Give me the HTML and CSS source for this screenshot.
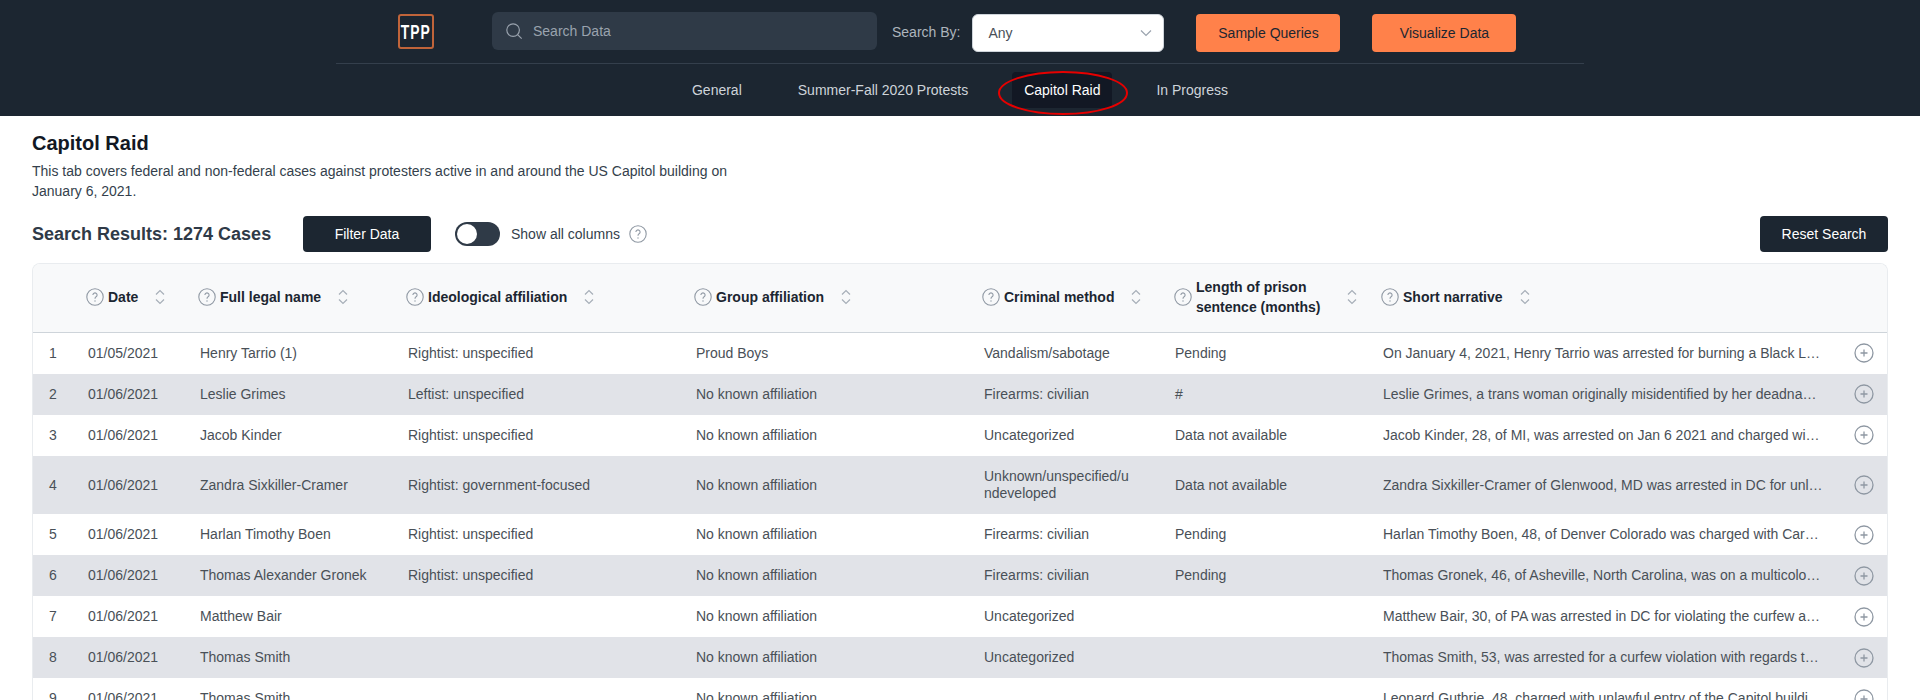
FILE: index.html
```html
<!DOCTYPE html>
<html lang="en">
<head>
    <meta charset="UTF-8">
    <title>Capitol Raid</title>
    <link rel="stylesheet" href="styles.css">
</head>
<body>
    <svg class="defs" width="0" height="0">
        <symbol id="help" viewBox="0 0 18 18">
            <circle cx="9" cy="9" r="8.200" fill="none" stroke="currentColor" stroke-width="1.100"/>
            <path d="M6.900 7a2.100 2.100 0 1 1 3.200 1.800C9.300 9.300 9 9.800 9 10.700" fill="none" stroke="currentColor" stroke-width="1.100"/>
            <circle cx="9" cy="13" r=".7" fill="currentColor"/>
        </symbol>
        <symbol id="sort" viewBox="0 0 12 18">
            <path d="M2 6.500 6 2.500l4 4M2 11.500l4 4 4-4" fill="none" stroke="currentColor" stroke-width="1.200"/>
        </symbol>
        <symbol id="plus" viewBox="0 0 20 20">
            <circle cx="10" cy="10" r="9" fill="none" stroke="currentColor" stroke-width="1.300"/>
            <path d="M10 6.500v7M6.500 10h7" fill="none" stroke="currentColor" stroke-width="1.300"/>
        </symbol>
    </svg>

    <header class="topbar">
        <div class="topbar-main">
            <div class="logo"><span>TPP</span></div>
            <div class="search">
                <svg class="search-icon" viewBox="0 0 20 20"><circle cx="9" cy="9" r="7" fill="none" stroke="currentColor" stroke-width="1.300"/><path d="m14 14 4.500 4.500" stroke="currentColor" stroke-width="1.300"/></svg>
                <span>Search Data</span>
            </div>
            <span class="search-by">Search By:</span>
            <div class="select">
                <span>Any</span>
                <svg class="select-arrow" viewBox="0 0 12 8"><path d="m1 1.500 5 5 5-5" fill="none" stroke="currentColor" stroke-width="1.200"/></svg>
            </div>
            <button class="btn btn-orange">Sample Queries</button>
            <button class="btn btn-orange">Visualize Data</button>
        </div>
        <nav class="tabs">
            <a class="tab">General</a>
            <a class="tab">Summer-Fall 2020 Protests</a>
            <a class="tab active">Capitol Raid<svg class="ring" viewBox="0 0 130 44"><ellipse cx="65" cy="22" rx="64" ry="21" fill="none" stroke="#e60000" stroke-width="2"/></svg></a>
            <a class="tab">In Progress</a>
        </nav>
    </header>

    <main class="content">
        <h1>Capitol Raid</h1>
        <p class="intro">This tab covers federal and non-federal cases against protesters active in and around the US Capitol building on January 6, 2021.</p>

        <div class="toolbar">
            <h2>Search Results: 1274 Cases</h2>
            <button class="btn btn-dark">Filter Data</button>
            <span class="switch"><span class="knob"></span></span>
            <span class="switch-label">Show all columns</span>
            <svg class="help"><use href="#help"/></svg>
            <button class="btn btn-dark reset">Reset Search</button>
        </div>

        <div class="table-wrap">
            <table>
                <colgroup>
                    <col class="c-num"><col class="c-date"><col class="c-name"><col class="c-ideo"><col class="c-group"><col class="c-method"><col class="c-length"><col class="c-story"><col class="c-more">
                </colgroup>
                <thead>
                    <tr>
                        <th></th>
                        <th><div class="th"><svg class="help"><use href="#help"/></svg><span>Date</span><svg class="sort"><use href="#sort"/></svg></div></th>
                        <th><div class="th"><svg class="help"><use href="#help"/></svg><span>Full legal name</span><svg class="sort"><use href="#sort"/></svg></div></th>
                        <th><div class="th"><svg class="help"><use href="#help"/></svg><span>Ideological affiliation</span><svg class="sort"><use href="#sort"/></svg></div></th>
                        <th><div class="th"><svg class="help"><use href="#help"/></svg><span>Group affiliation</span><svg class="sort"><use href="#sort"/></svg></div></th>
                        <th><div class="th"><svg class="help"><use href="#help"/></svg><span>Criminal method</span><svg class="sort"><use href="#sort"/></svg></div></th>
                        <th><div class="th th-length"><svg class="help"><use href="#help"/></svg><span>Length of prison sentence (months)</span><svg class="sort"><use href="#sort"/></svg></div></th>
                        <th><div class="th"><svg class="help"><use href="#help"/></svg><span>Short narrative</span><svg class="sort"><use href="#sort"/></svg></div></th>
                        <th></th>
                    </tr>
                </thead>
                <tbody>
                    <tr><td>1</td><td>01/05/2021</td><td>Henry Tarrio (1)</td><td>Rightist: unspecified</td><td>Proud Boys</td><td>Vandalism/sabotage</td><td>Pending</td><td class="story">On January 4, 2021, Henry Tarrio was arrested for burning a Black Lives Matter banner stolen from a church</td><td class="more"><svg class="plus"><use href="#plus"/></svg></td></tr>
                    <tr><td>2</td><td>01/06/2021</td><td>Leslie Grimes</td><td>Leftist: unspecified</td><td>No known affiliation</td><td>Firearms: civilian</td><td>#</td><td class="story">Leslie Grimes, a trans woman originally misidentified by her deadname in court records and reports</td><td class="more"><svg class="plus"><use href="#plus"/></svg></td></tr>
                    <tr><td>3</td><td>01/06/2021</td><td>Jacob Kinder</td><td>Rightist: unspecified</td><td>No known affiliation</td><td>Uncategorized</td><td>Data not available</td><td class="story">Jacob Kinder, 28, of MI, was arrested on Jan 6 2021 and charged with violating the curfew order</td><td class="more"><svg class="plus"><use href="#plus"/></svg></td></tr>
                    <tr><td>4</td><td>01/06/2021</td><td>Zandra Sixkiller-Cramer</td><td>Rightist: government-focused</td><td>No known affiliation</td><td class="method-long">Unknown/unspecified/undeveloped</td><td>Data not available</td><td class="story">Zandra Sixkiller-Cramer of Glenwood, MD was arrested in DC for unlawful entry of the Capitol</td><td class="more"><svg class="plus"><use href="#plus"/></svg></td></tr>
                    <tr><td>5</td><td>01/06/2021</td><td>Harlan Timothy Boen</td><td>Rightist: unspecified</td><td>No known affiliation</td><td>Firearms: civilian</td><td>Pending</td><td class="story">Harlan Timothy Boen, 48, of Denver Colorado was charged with Carrying a Pistol Without a License</td><td class="more"><svg class="plus"><use href="#plus"/></svg></td></tr>
                    <tr><td>6</td><td>01/06/2021</td><td>Thomas Alexander Gronek</td><td>Rightist: unspecified</td><td>No known affiliation</td><td>Firearms: civilian</td><td>Pending</td><td class="story">Thomas Gronek, 46, of Asheville, North Carolina, was on a multicolored bus when it was stopped by police</td><td class="more"><svg class="plus"><use href="#plus"/></svg></td></tr>
                    <tr><td>7</td><td>01/06/2021</td><td>Matthew Bair</td><td></td><td>No known affiliation</td><td>Uncategorized</td><td></td><td class="story">Matthew Bair, 30, of PA was arrested in DC for violating the curfew and was later released</td><td class="more"><svg class="plus"><use href="#plus"/></svg></td></tr>
                    <tr><td>8</td><td>01/06/2021</td><td>Thomas Smith</td><td></td><td>No known affiliation</td><td>Uncategorized</td><td></td><td class="story">Thomas Smith, 53, was arrested for a curfew violation with regards to the events at the Capitol</td><td class="more"><svg class="plus"><use href="#plus"/></svg></td></tr>
                    <tr><td>9</td><td>01/06/2021</td><td>Thomas Smith</td><td></td><td>No known affiliation</td><td></td><td></td><td class="story">Leonard Guthrie, 48, charged with unlawful entry of the Capitol building during the riot</td><td class="more"><svg class="plus"><use href="#plus"/></svg></td></tr>
                </tbody>
            </table>
        </div>
    </main>
</body>
</html>
```
FILE: styles.css
```css
*{
    box-sizing: border-box;
    margin: 0;
    padding: 0;
}
html{
    overflow: hidden;
}
body{
    font-family: "Liberation Sans", sans-serif;
    font-size: 14px;
    line-height: 20px;
    color: #1c2631;
    background: #fff;
}
.defs{
    position: absolute;
}

/* top bar */
.topbar{
    height: 116px;
    background: #1c2631;
}
.topbar-main{
    width: 1248px;
    height: 64px;
    margin-left: 336px;
    padding-left: 62px;
    border-bottom: 1px solid #343f4c;
    display: flex;
    align-items: center;
}
.logo{
    width: 36px;
    height: 35px;
    border: 2px solid #c0643a;
    border-radius: 3px;
    color: #fff;
    font-size: 21px;
    font-weight: 700;
    line-height: 31px;
    text-align: center;
    margin-right: 58px;
    margin-top: -1px;
    display: flex;
    justify-content: center;
}
.logo span{
    display: block;
    letter-spacing: 1.5px;
    transform: scaleX(.66);
}
.search{
    width: 385px;
    height: 38px;
    margin-top: -2px;
    background: #2f3a47;
    border-radius: 6px;
    padding-left: 13px;
    display: flex;
    align-items: center;
    gap: 10px;
    color: #9aa3ae;
}
.search-icon{
    width: 18px;
    height: 18px;
}
.search-by{
    color: #adb5bd;
    margin-left: 15px;
    margin-right: 12px;
}
.select{
    width: 192px;
    height: 38px;
    margin-top: 2px;
    background: #fff;
    border: 1px solid #ced4da;
    border-radius: 6px;
    color: #495057;
    padding: 0 11px 0 15px;
    display: flex;
    align-items: center;
    justify-content: space-between;
    margin-right: 32px;
}
.select-arrow{
    width: 12px;
    height: 8px;
    color: #9aa3ae;
}
.btn{
    font: inherit;
    border: 0;
    border-radius: 4px;
    height: 38px;
    width: 144px;
}
.btn-orange{
    background: #ff814a;
    color: #1c2631;
    margin-top: 2px;
    margin-right: 32px;
}
.btn-dark{
    background: #1c2631;
    color: #fff;
    width: 128px;
    height: 36px;
}
.tabs{
    display: flex;
    justify-content: center;
    gap: 32px;
    padding-top: 8px;
}
.tab{
    position: relative;
    height: 36px;
    padding: 0 12px;
    border-radius: 4px;
    line-height: 36px;
    color: #ced4da;
}
.tab.active{
    background: #121824;
    color: #fff;
}
.ring{
    position: absolute;
    left: -14px;
    top: -1px;
    width: 130px;
    height: 44px;
}

/* page body */
.content{
    padding: 17px 32px 0;
}
h1{
    font-size: 20px;
    line-height: 20px;
    font-weight: 700;
    color: #121824;
}
.intro{
    width: 720px;
    margin-top: 8px;
    color: #343f4c;
}
.toolbar{
    display: flex;
    align-items: center;
    margin-top: 15px;
}
h2{
    font-size: 18px;
    line-height: 36px;
    font-weight: 700;
    color: #2f3a47;
    width: 271px;
}
.switch{
    width: 45px;
    height: 24px;
    margin-left: 24px;
    border-radius: 12px;
    background: #2f3a47;
    padding: 2px;
    display: block;
}
.knob{
    display: block;
    width: 20px;
    height: 20px;
    border-radius: 50%;
    background: #fff;
}
.switch-label{
    margin-left: 11px;
    color: #343f4c;
}
.help{
    width: 18px;
    height: 18px;
    flex: none;
    color: #8f98a3;
}
.toolbar .help{
    margin-left: 9px;
}
.reset{
    margin-left: auto;
}

/* results table */
.table-wrap{
    margin-top: 11px;
    border: 1px solid #e9ecef;
    border-bottom: 0;
    border-radius: 8px 8px 0 0;
    overflow: hidden;
}
table{
    width: 100%;
    table-layout: fixed;
    border-collapse: collapse;
}
.c-num{ width: 39px; }
.c-date{ width: 112px; }
.c-name{ width: 208px; }
.c-ideo{ width: 288px; }
.c-group{ width: 288px; }
.c-method{ width: 191px; }
.c-length{ width: 208px; }
.c-more{ width: 48px; }
thead tr{
    height: 68px;
    background: #f8f9fa;
    border-bottom: 1px solid #ced4da;
}
th{
    padding: 0 14px 1px;
    text-align: left;
    font-weight: 700;
    color: #1c2631;
}
.th{
    display: flex;
    align-items: center;
    gap: 4px;
}
.th-length{
    margin-left: 1px;
}
.th-length span{
    flex: none;
    width: 128px;
}
.sort{
    width: 12px;
    height: 18px;
    flex: none;
    margin-left: 12px;
    color: #a7afb8;
}
.th-length .sort{
    margin-left: 18px;
}
td{
    padding: 12.25px 16px 11.25px;
    line-height: 17.5px;
    color: #495057;
    overflow-wrap: anywhere;
}
tbody tr:nth-child(even){
    background: #e1e3e8;
}
.method-long{
    padding-right: 26px;
}
.story{
    white-space: nowrap;
    overflow: hidden;
    text-overflow: ellipsis;
}
.more{
    padding: 0 14px 0 15px;
    line-height: 0;
}
.plus{
    width: 20px;
    height: 20px;
    color: #8f98a3;
}
```
